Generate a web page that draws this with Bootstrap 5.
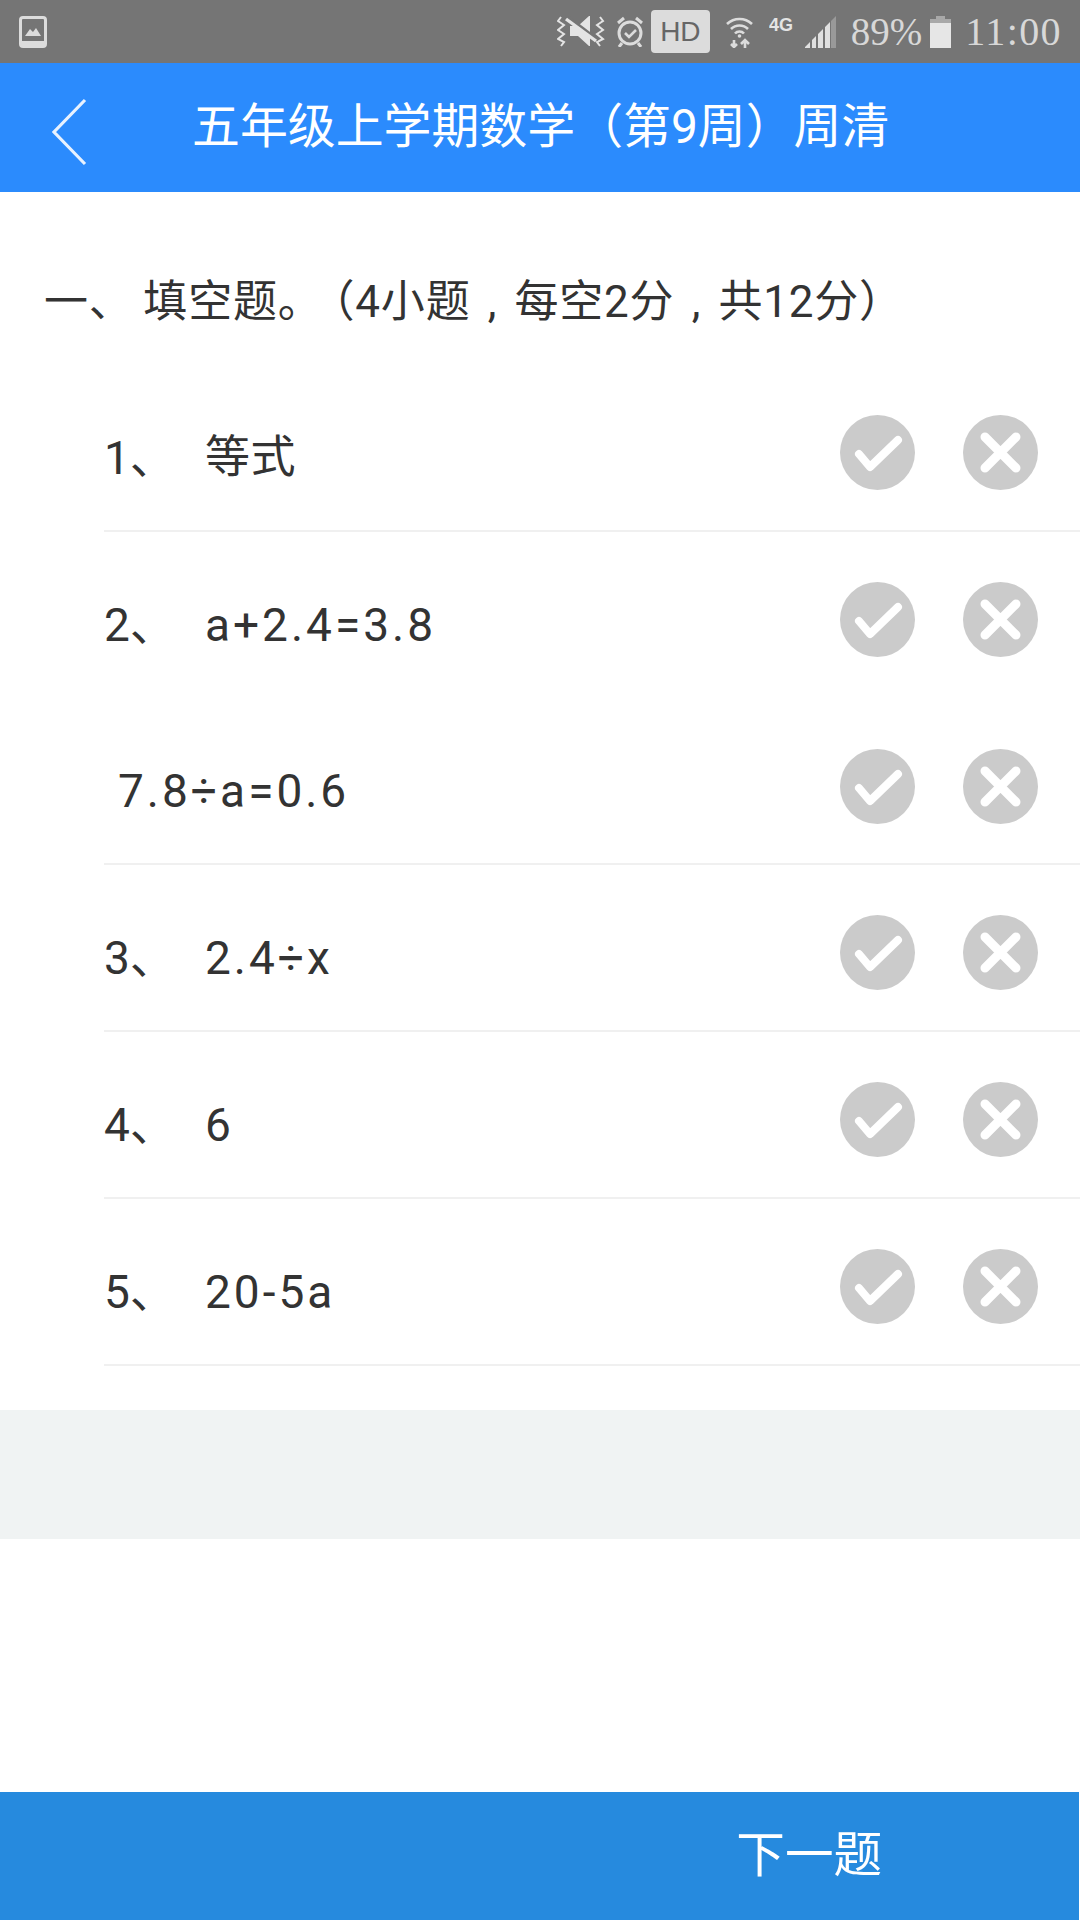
<!DOCTYPE html>
<html lang="zh-CN">
<head>
<meta charset="utf-8">
<title>周清</title>
<link rel="stylesheet" href="https://cdn.jsdelivr.net/npm/bootstrap@5.3.0/dist/css/bootstrap.min.css">
<style>
html,body{margin:0;background:#fff;}
body{font-family:Roboto,"Noto Sans CJK SC",sans-serif;color:#333;width:1080px;height:1920px;overflow:hidden;}
.app-page{height:1920px;}
.status-strip{height:63px;background:#757575;color:#dcdcdc;padding:0 18px 0 19px;}
.status-text{font-family:"Liberation Serif",serif;font-size:40px;line-height:1;color:#d8d8d8;}
.clock-text{letter-spacing:1.4px;margin-left:14px;}
.pct-text{font-size:39px;margin-left:14px;}
.hd-tag{width:59px;height:43px;background:#dcdcdc;color:#666;border-radius:4px;font-family:"Liberation Sans",sans-serif;font-size:28px;line-height:43px;text-align:center;margin:0 16px 0 7px;}
.alarm-mark{margin-left:11px;}
.four-g{margin:16px 0 0 16px;align-self:flex-start;}
.signal-mark{margin-left:11px;}
.top-head{height:129px;background:#2b8bfd;color:#fff;}
.top-title{font-size:47.9px;line-height:1;left:192px;top:0;padding-top:1px;}
.back-mark{margin-left:51px;margin-top:8px;}
.quiz-sec{padding-top:80px;}
.sec-head{padding-left:44px;font-size:44px;line-height:60px;height:60px;margin-bottom:33px;white-space:nowrap;letter-spacing:.8px;}
.sec-gap{margin-left:-2px;}
.paren-gap{margin-left:10px;}
.cell-comma{display:inline-block;width:1em;text-align:center;}
.q-row{height:166.8px;margin-left:104px;padding-right:42px;padding-top:50px;}
.q-line{border-bottom:2px solid #f0f0f0;}
.q-num{width:101px;font-size:46px;line-height:62px;margin-top:12px;}
.q-txt{font-size:46px;line-height:62px;margin-top:12px;letter-spacing:3px;}
.q-cjk{font-size:45px;letter-spacing:.6px;}
.q-cont{padding-left:14px;margin-top:-1px;}
.q-marks{gap:48px;}
.gray-band{height:129px;background:#f0f3f3;margin-top:44px;}
.foot-bar{height:128px;background:#268ade;color:#fff;width:1079px;}
.foot-bar .btn{color:#fff;font-size:48.6px;line-height:1;border:0;padding:0;}
</style>
</head>
<body>
<div class="app-page d-flex flex-column">
  <div class="status-strip d-flex align-items-center">
    <svg width="28" height="32" viewBox="0 0 28 32"><rect x="1.5" y="1.5" width="25" height="29" rx="2.5" fill="none" stroke="#dcdcdc" stroke-width="3"/><rect x="1.5" y="25" width="25" height="5" fill="#dcdcdc"/><path d="M6 20l5-7 3 3 3-4 5 8z" fill="#dcdcdc"/></svg>
    <div class="flex-grow-1"></div>
    <svg width="48" height="31" viewBox="0 0 48 31" fill="none" stroke="#e4e4e4"><path d="M4 1L1 5l6 4-6 5 6 4-6 5 6 3-3 4M43 1l3 4-6 4 6 5-6 4 6 5-6 3 3 4" stroke-width="2"/><path d="M13 10h8L32 0h1v30h-1L21 20h-8z" fill="#e4e4e4" stroke="none"/><path d="M11 1l30 23" stroke="#757575" stroke-width="3"/><path d="M9 3l30 22" stroke-width="3.4"/></svg>
    <svg class="alarm-mark" width="28" height="31" viewBox="0 0 28 31" fill="none" stroke="#dcdcdc" stroke-width="3"><circle cx="14" cy="17" r="11"/><path d="M2 7l6-5M26 7l-6-5M6 27l-3 4M22 27l3 4"/><path d="M9 17l4 4 7-7" stroke-width="2.6"/></svg>
    <div class="hd-tag">HD</div>
    <svg width="27" height="32" viewBox="0 0 27 32" fill="none" stroke="#dcdcdc" stroke-width="2.6"><path d="M1 8a18 18 0 0 1 25 0M5 13a12 12 0 0 1 17 0M9 17.500a6 6 0 0 1 9 0"/><circle cx="13.500" cy="20" r="1.800" fill="#dcdcdc" stroke="none"/><path d="M8 24v7M5 28l3 3 3-3M19 32v-8M15 28l4-4 4 4"/></svg>
    <svg class="four-g" width="24" height="18" viewBox="0 0 24 18"><text x="0" y="15" font-family="Liberation Sans" font-weight="700" font-size="18" fill="#e4e4e4">4G</text></svg>
    <svg class="signal-mark" width="33" height="32" viewBox="0 0 33 32"><path d="M1 32v-1l5-5v6zM8 32v-8l4-4v12zM14 32V18l5-5v19zM21 32V11l5-5v26z" fill="#e0e0e0"/><path d="M27 32V5l5-5v32z" fill="#999"/></svg>
    <span class="status-text pct-text">89%</span>
    <svg class="ms-2" width="21" height="32" viewBox="0 0 21 32"><path d="M6 0h9v3h6v29H0V3h6z" fill="#e6e6e6"/><path d="M6 0h9v3h6v4H0V3h6z" fill="#a8a8a8"/></svg>
    <span class="status-text clock-text">11:00</span>
  </div>

  <div class="top-head d-flex align-items-center position-relative">
    <svg class="back-mark" width="36" height="68" viewBox="0 0 36 68" fill="none" stroke="#e8f2ff" stroke-width="3.2"><path d="M34 2L3 34l31 32"/></svg>
    <div class="top-title position-absolute h-100 d-flex align-items-center">五年级上学期数学（第9周）周清</div>
  </div>

  <div class="quiz-sec">
    <div class="sec-head">一、 <span class="sec-gap">填空题。</span><span class="paren-gap">（4小题<span class="cell-comma">,</span>每空2分<span class="cell-comma">,</span>共12分）</span></div>

    <div class="q-row q-line d-flex justify-content-between align-items-start">
      <div class="d-flex"><span class="q-num">1、</span><span class="q-txt q-cjk">等式</span></div>
      <div class="q-marks d-flex">
        <svg width="75" height="75" viewBox="0 0 75 75"><circle cx="37.5" cy="37.5" r="37.5" fill="#cbcbcb"/><path d="M19 39l11 13 28-27" fill="none" stroke="#fff" stroke-width="8" stroke-linecap="round" stroke-linejoin="round"/></svg>
        <svg width="75" height="75" viewBox="0 0 75 75"><circle cx="37.5" cy="37.5" r="37.5" fill="#cbcbcb"/><path d="M22 22l31 31M53 22L22 53" fill="none" stroke="#fff" stroke-width="9" stroke-linecap="round"/></svg>
      </div>
    </div>
    <div class="q-row d-flex justify-content-between align-items-start">
      <div class="d-flex"><span class="q-num">2、</span><span class="q-txt">a+2.4=3.8</span></div>
      <div class="q-marks d-flex">
        <svg width="75" height="75" viewBox="0 0 75 75"><circle cx="37.5" cy="37.5" r="37.5" fill="#cbcbcb"/><path d="M19 39l11 13 28-27" fill="none" stroke="#fff" stroke-width="8" stroke-linecap="round" stroke-linejoin="round"/></svg>
        <svg width="75" height="75" viewBox="0 0 75 75"><circle cx="37.5" cy="37.5" r="37.5" fill="#cbcbcb"/><path d="M22 22l31 31M53 22L22 53" fill="none" stroke="#fff" stroke-width="9" stroke-linecap="round"/></svg>
      </div>
    </div>
    <div class="q-row q-line d-flex justify-content-between align-items-start">
      <div class="d-flex q-cont"><span class="q-txt">7.8÷a=0.6</span></div>
      <div class="q-marks d-flex">
        <svg width="75" height="75" viewBox="0 0 75 75"><circle cx="37.5" cy="37.5" r="37.5" fill="#cbcbcb"/><path d="M19 39l11 13 28-27" fill="none" stroke="#fff" stroke-width="8" stroke-linecap="round" stroke-linejoin="round"/></svg>
        <svg width="75" height="75" viewBox="0 0 75 75"><circle cx="37.5" cy="37.5" r="37.5" fill="#cbcbcb"/><path d="M22 22l31 31M53 22L22 53" fill="none" stroke="#fff" stroke-width="9" stroke-linecap="round"/></svg>
      </div>
    </div>
    <div class="q-row q-line d-flex justify-content-between align-items-start">
      <div class="d-flex"><span class="q-num">3、</span><span class="q-txt">2.4÷x</span></div>
      <div class="q-marks d-flex">
        <svg width="75" height="75" viewBox="0 0 75 75"><circle cx="37.5" cy="37.5" r="37.5" fill="#cbcbcb"/><path d="M19 39l11 13 28-27" fill="none" stroke="#fff" stroke-width="8" stroke-linecap="round" stroke-linejoin="round"/></svg>
        <svg width="75" height="75" viewBox="0 0 75 75"><circle cx="37.5" cy="37.5" r="37.5" fill="#cbcbcb"/><path d="M22 22l31 31M53 22L22 53" fill="none" stroke="#fff" stroke-width="9" stroke-linecap="round"/></svg>
      </div>
    </div>
    <div class="q-row q-line d-flex justify-content-between align-items-start">
      <div class="d-flex"><span class="q-num">4、</span><span class="q-txt">6</span></div>
      <div class="q-marks d-flex">
        <svg width="75" height="75" viewBox="0 0 75 75"><circle cx="37.5" cy="37.5" r="37.5" fill="#cbcbcb"/><path d="M19 39l11 13 28-27" fill="none" stroke="#fff" stroke-width="8" stroke-linecap="round" stroke-linejoin="round"/></svg>
        <svg width="75" height="75" viewBox="0 0 75 75"><circle cx="37.5" cy="37.5" r="37.5" fill="#cbcbcb"/><path d="M22 22l31 31M53 22L22 53" fill="none" stroke="#fff" stroke-width="9" stroke-linecap="round"/></svg>
      </div>
    </div>
    <div class="q-row q-line d-flex justify-content-between align-items-start">
      <div class="d-flex"><span class="q-num">5、</span><span class="q-txt">20-5a</span></div>
      <div class="q-marks d-flex">
        <svg width="75" height="75" viewBox="0 0 75 75"><circle cx="37.5" cy="37.5" r="37.5" fill="#cbcbcb"/><path d="M19 39l11 13 28-27" fill="none" stroke="#fff" stroke-width="8" stroke-linecap="round" stroke-linejoin="round"/></svg>
        <svg width="75" height="75" viewBox="0 0 75 75"><circle cx="37.5" cy="37.5" r="37.5" fill="#cbcbcb"/><path d="M22 22l31 31M53 22L22 53" fill="none" stroke="#fff" stroke-width="9" stroke-linecap="round"/></svg>
      </div>
    </div>
    <div class="gray-band"></div>
  </div>

  <div class="flex-grow-1"></div>

  <div class="foot-bar row g-0 align-items-center">
    <div class="col-6"></div>
    <div class="col-6 text-center"><button type="button" class="btn">下一题</button></div>
  </div>
</div>
<script src="https://cdn.jsdelivr.net/npm/bootstrap@5.3.0/dist/js/bootstrap.bundle.min.js"></script>
</body>
</html>
